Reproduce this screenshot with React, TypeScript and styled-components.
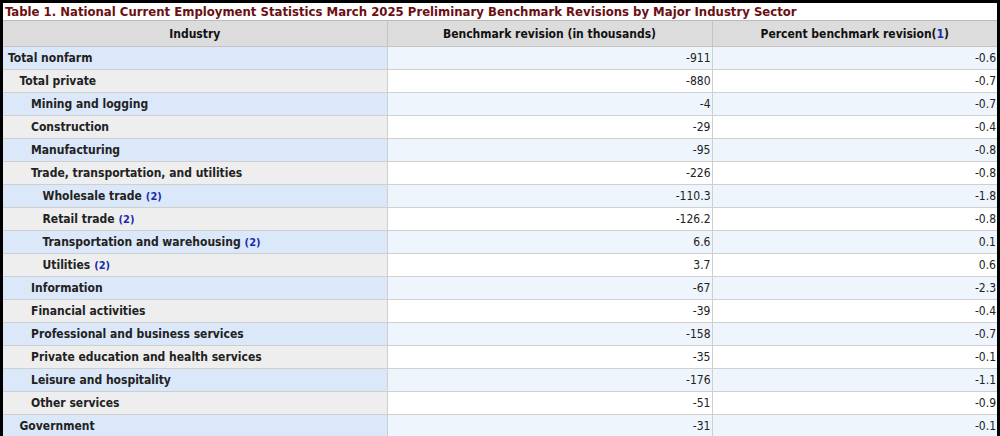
import React from "react";
import styled, { createGlobalStyle } from "styled-components";

const G = createGlobalStyle`
  html, body { margin: 0; padding: 0; background: #fff; }
  body { font-family: "DejaVu Sans Condensed", "DejaVu Sans", Verdana, sans-serif; }
`;

const Frame = styled.div`
  width: 1000px; height: 436px; box-sizing: border-box; overflow: hidden;
  border: 3px solid #000; border-bottom: none;
`;
const Title = styled.div`
  height: 17px; line-height: 17px; padding-left: 2px;
  font-size: 13px; font-weight: bold; color: #6b0f12;
`;
const Table = styled.table`
  width: 100%; border-collapse: collapse; table-layout: fixed;
  font-size: 12px;
`;
const Th = styled.th`
  height: 25px; background: #dcdcdc; font-weight: bold; color: #111;
  border: 1px solid #c4c4c4; border-top: 1px solid #bbb; padding: 0;
  &:first-child { border-left: none; }
  &:last-child { border-right: none; }
`;
const Td = styled.td<{ $odd: boolean; $first?: boolean; $lvl?: number }>`
  height: 22px; padding: 0 ${p => (p.$first ? 0 : 1)}px 0 ${p => (p.$first ? 5 + (p.$lvl || 0) * 11.5 : 0)}px;
  border: 1px solid #cfcfcf;
  text-align: ${p => (p.$first ? "left" : "right")};
  font-weight: ${p => (p.$first ? "bold" : "normal")};
  color: #222;
  background: ${p => (p.$first ? (p.$odd ? "#dbe8fa" : "#eeeeee") : p.$odd ? "#eff5fd" : "#fff")};
  &:first-child { border-left: none; }
  &:last-child { border-right: none; }
`;
const Fn = styled.span`
  color: #1a2bb0; font-size: 11px; font-weight: bold; margin-left: 4px;
`;
const Fh = styled.span` color: #1a2bb0; `;

const rows: [string, number, string, string, boolean?][] = [
  ["Total nonfarm", 0, "-911", "-0.6"],
  ["Total private", 1, "-880", "-0.7"],
  ["Mining and logging", 2, "-4", "-0.7"],
  ["Construction", 2, "-29", "-0.4"],
  ["Manufacturing", 2, "-95", "-0.8"],
  ["Trade, transportation, and utilities", 2, "-226", "-0.8"],
  ["Wholesale trade", 3, "-110.3", "-1.8", true],
  ["Retail trade", 3, "-126.2", "-0.8", true],
  ["Transportation and warehousing", 3, "6.6", "0.1", true],
  ["Utilities", 3, "3.7", "0.6", true],
  ["Information", 2, "-67", "-2.3"],
  ["Financial activities", 2, "-39", "-0.4"],
  ["Professional and business services", 2, "-158", "-0.7"],
  ["Private education and health services", 2, "-35", "-0.1"],
  ["Leisure and hospitality", 2, "-176", "-1.1"],
  ["Other services", 2, "-51", "-0.9"],
  ["Government", 1, "-31", "-0.1"],
];

export default function App() {
  return (
    <Frame>
      <G />
      <Title>Table 1. National Current Employment Statistics March 2025 Preliminary Benchmark Revisions by Major Industry Sector</Title>
      <Table>
        <colgroup>
          <col style={{ width: 384 }} />
          <col style={{ width: 325 }} />
          <col />
        </colgroup>
        <thead>
          <tr>
            <Th>Industry</Th>
            <Th>Benchmark revision (in thousands)</Th>
            <Th>Percent benchmark revision(<Fh>1</Fh>)</Th>
          </tr>
        </thead>
        <tbody>
          {rows.map(([n, l, a, b, f], i) => (
            <tr key={n}>
              <Td $odd={i % 2 === 0} $first $lvl={l}>
                {n}{f && <Fn>(2)</Fn>}
              </Td>
              <Td $odd={i % 2 === 0}>{a}</Td>
              <Td $odd={i % 2 === 0}>{b}</Td>
            </tr>
          ))}
        </tbody>
      </Table>
    </Frame>
  );
}
